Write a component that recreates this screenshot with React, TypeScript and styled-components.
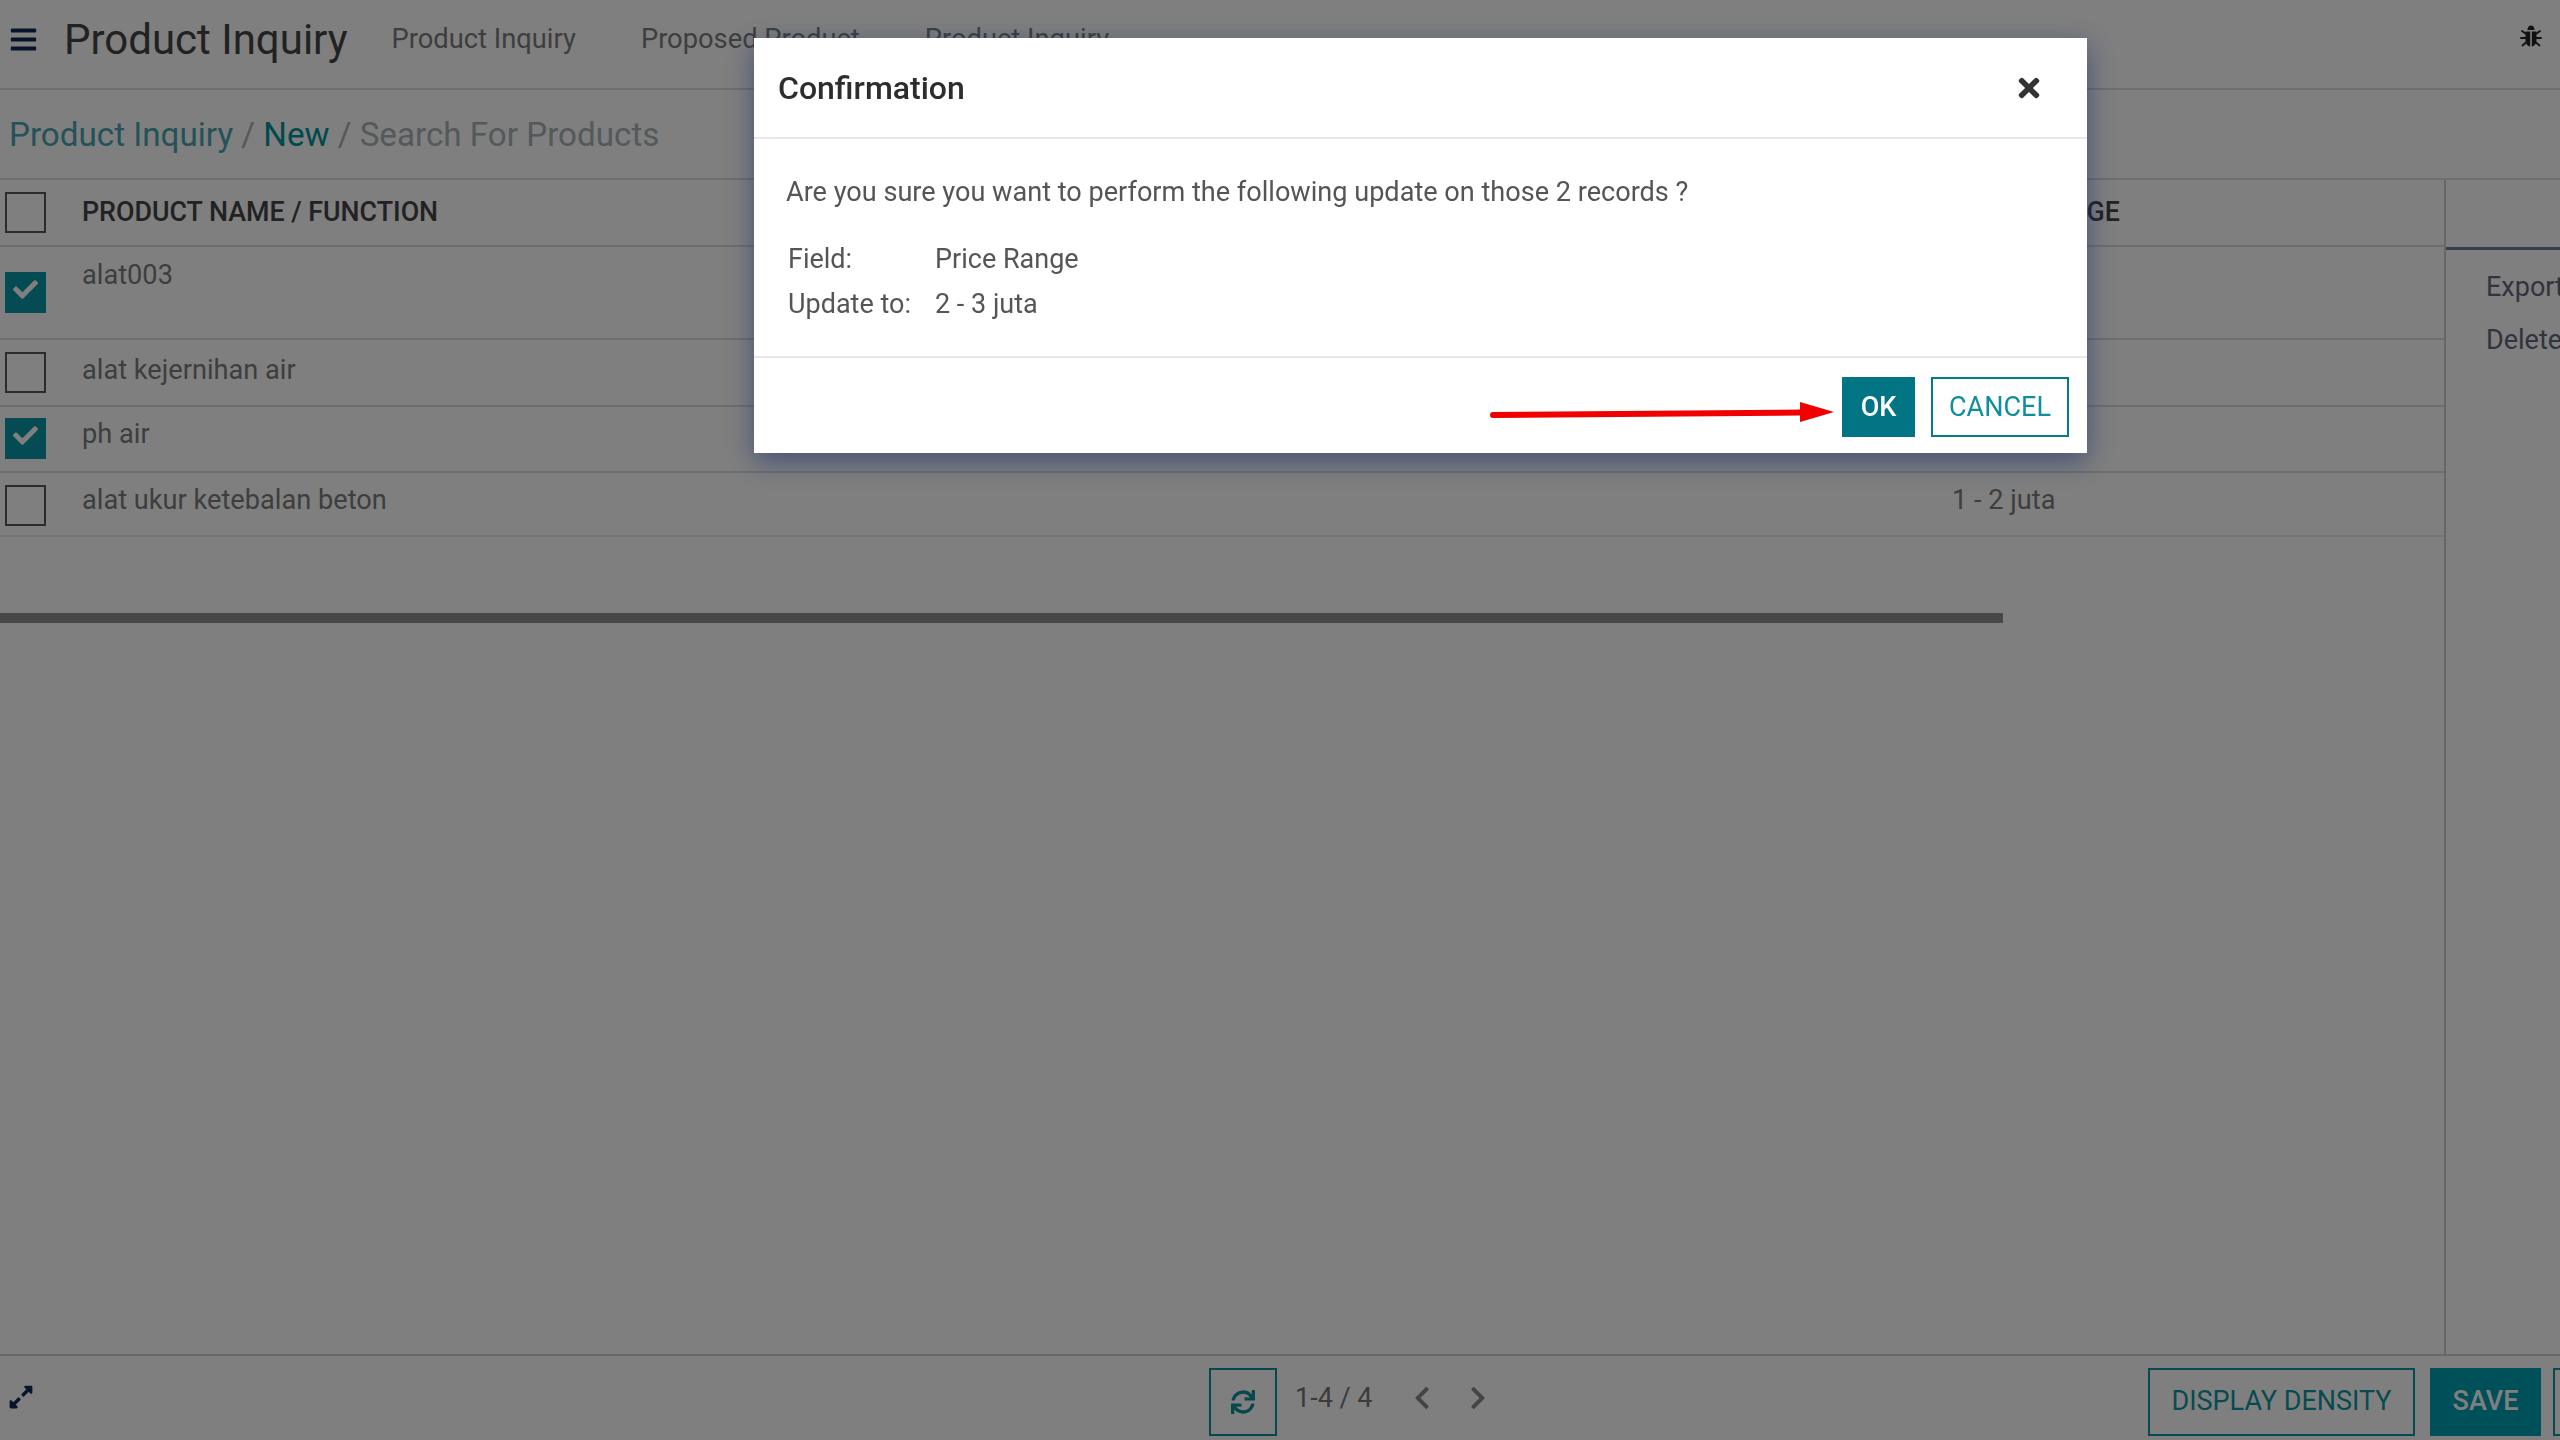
import React from "react";
import styled, { createGlobalStyle } from "styled-components";
import { FaBars, FaCheck, FaChevronLeft, FaChevronRight, FaExpandAlt, FaSync, FaTimes } from "react-icons/fa";

const Global = createGlobalStyle`
  html, body { margin: 0; padding: 0; width: 2560px; height: 1440px; overflow: hidden; background: #fff; }
  * { box-sizing: border-box; }
  body { font-family: Roboto, "Liberation Sans", sans-serif; color: #777; }
`;

const Page = styled.div`
  width: 2560px;
  height: 1440px;
  display: flex;
  flex-direction: column;
  overflow: hidden;
`;

const TopBar = styled.header`
  height: 90px;
  flex: none;
  display: flex;
  align-items: center;
  padding: 0 18px 10px 9px;
  border-bottom: 2px solid #dcdcdc;
  color: #7c7c7c;
`;

const Burger = styled(FaBars)`
  width: 29px;
  height: 29px;
  color: #0c2a55;
  flex: none;
`;

const AppTitle = styled.h1`
  margin: 0 44px 0 26px;
  font-size: 42px;
  font-weight: 400;
  color: #444;
  white-space: nowrap;
`;

const MenuItem = styled.span`
  font-size: 27.3px;
  margin-right: 65px;
  white-space: nowrap;
`;

const Bug = styled.svg`
  width: 22px;
  height: 24px;
  margin: 0 0 6px auto;
  flex: none;
  color: #222;
`;

const Breadcrumb = styled.nav`
  height: 90px;
  flex: none;
  display: flex;
  align-items: center;
  padding: 0 0 0 9px;
  font-size: 33.2px;
  color: #a8b2b6;
  white-space: pre;
  border-bottom: 2px solid #dcdcdc;
`;

const Crumb = styled.span<{ $strong?: boolean }>`
  color: ${(p) => (p.$strong ? "#00949c" : "#4aa5b0")};
`;

const Content = styled.div`
  flex: 1;
  min-height: 0;
  display: flex;
`;

const ListArea = styled.main`
  width: 2444px;
  flex: none;
  overflow: hidden;
`;

const Row = styled.div<{ $h: number; $faint?: boolean }>`
  height: ${(p) => p.$h}px;
  display: grid;
  grid-template-columns: 82px 1870px 1fr;
  border-bottom: 2px solid ${(p) => (p.$faint ? "#ececec" : "#dcdcdc")};
`;

const CheckCell = styled.div<{ $top: number }>`
  padding: ${(p) => p.$top}px 0 0 5px;
`;

const Box = styled.div<{ $on?: boolean }>`
  width: 41px;
  height: 41px;
  display: flex;
  align-items: center;
  justify-content: center;
  border: 2px solid ${(p) => (p.$on ? "#0a97a6" : "#585858")};
  background: ${(p) => (p.$on ? "#0a97a6" : "transparent")};
  color: #fff;
  svg {
    width: 25px;
    height: 25px;
    margin-top: -6px;
  }
`;

const HeadText = styled.div`
  font-size: 26.8px;
  font-weight: 500;
  line-height: 32px;
  padding-top: 16px;
  color: #444;
  white-space: nowrap;
`;

const CellText = styled.div<{ $top: number }>`
  font-size: 27.2px;
  line-height: 36px;
  padding-top: ${(p) => p.$top}px;
  color: #7c7c7c;
  white-space: nowrap;
`;

const ScrollTrack = styled.div`
  width: 2003px;
  height: 10px;
  margin-top: 76px;
  background: #8e8e8e;
`;

const Sidebar = styled.aside`
  flex: 1;
  min-width: 0;
  overflow: hidden;
  border-left: 2px solid #cfcfcf;
`;

const SideTab = styled.div`
  height: 70px;
  border-bottom: 3px solid #6b7f9c;
`;

const SideActions = styled.div`
  padding: 11px 0 0 40px;
`;

const SideAction = styled.div`
  font-size: 27px;
  line-height: 53px;
  color: #66667a;
  white-space: nowrap;
`;

const Footer = styled.footer`
  height: 86px;
  flex: none;
  display: flex;
  align-items: flex-start;
  padding: 12px 0 0 8px;
  border-top: 2px solid #d0d0d0;
  overflow: hidden;
`;

const Expand = styled(FaExpandAlt)`
  width: 26px;
  height: 26px;
  margin-top: 16px;
  color: #0c2a55;
  flex: none;
`;

const Refresh = styled.div`
  width: 68px;
  height: 68px;
  margin-left: 1175px;
  flex: none;
  display: flex;
  align-items: center;
  justify-content: center;
  border: 2px solid #0f8f9c;
  color: #0f8f9c;
  svg {
    width: 24px;
    height: 24px;
  }
`;

const Pager = styled.span`
  margin: 14px 0 0 18px;
  width: 119px;
  flex: none;
  font-size: 27px;
  line-height: 32px;
  color: #777;
  white-space: nowrap;
`;

const Chevron = styled.span<{ $gap: number }>`
  margin: 17px 0 0 ${(p) => p.$gap}px;
  width: 16px;
  height: 26px;
  flex: none;
  color: #8a8a8a;
  svg {
    display: block;
    width: 16px;
    height: 26px;
  }
`;

const OutlineButton = styled.div<{ $w: number; $gap: number }>`
  width: ${(p) => p.$w}px;
  height: 68px;
  margin-left: ${(p) => p.$gap}px;
  flex: none;
  display: flex;
  align-items: center;
  justify-content: center;
  padding-bottom: 2px;
  border: 2px solid #0f97a5;
  color: #0f97a5;
  font-size: 27px;
  white-space: nowrap;
`;

const SolidButton = styled.div`
  width: 111px;
  height: 68px;
  margin-left: 15px;
  flex: none;
  display: flex;
  align-items: center;
  justify-content: center;
  padding-bottom: 2px;
  background: #00a0b5;
  color: #fff;
  font-size: 27px;
  font-weight: 500;
`;

const Backdrop = styled.div`
  position: fixed;
  inset: 0;
  background: rgba(0, 0, 0, 0.5);
  padding: 38px 0 0 754px;
`;

const Modal = styled.section`
  position: relative;
  width: 1333px;
  height: 415px;
  display: flex;
  flex-direction: column;
  background: #fff;
  box-shadow: 0 8px 26px rgba(30, 50, 110, 0.6);
`;

const ModalHead = styled.div`
  height: 101px;
  flex: none;
  display: flex;
  align-items: center;
  justify-content: space-between;
  padding: 0 43px 0 24px;
  border-bottom: 2px solid #e8e8e8;
`;

const ModalTitle = styled.h2`
  margin: 0;
  font-size: 32px;
  font-weight: 500;
  color: #2d2d2d;
`;

const CloseIcon = styled(FaTimes)`
  width: 30px;
  height: 30px;
  color: #333;
`;

const ModalBody = styled.div`
  height: 219px;
  flex: none;
  padding: 33px 0 0 32px;
  border-bottom: 2px solid #e8e8e8;
`;

const Question = styled.p`
  margin: 0;
  font-size: 27.1px;
  line-height: 40px;
  color: #555;
`;

const Fields = styled.div`
  display: grid;
  grid-template-columns: 147px 1fr;
  grid-auto-rows: 45px;
  align-items: center;
  margin: 24px 0 0 2px;
  font-size: 27px;
  color: #555;
`;

const ModalFoot = styled.div`
  flex: 1;
  display: flex;
  align-items: flex-start;
  justify-content: flex-end;
  gap: 16px;
  padding: 19px 18px 0 0;
`;

const OkButton = styled.div`
  width: 73px;
  height: 60px;
  display: flex;
  align-items: center;
  justify-content: center;
  background: #017583;
  color: #fff;
  font-size: 27px;
  font-weight: 500;
`;

const CancelButton = styled.div`
  width: 138px;
  height: 60px;
  display: flex;
  align-items: center;
  justify-content: center;
  border: 2px solid #017e8a;
  color: #0e8f9b;
  font-size: 27px;
`;

const Arrow = styled.svg`
  position: absolute;
  left: 736px;
  top: 362px;
  width: 344px;
  height: 24px;
`;

const rows = [
  { name: "alat003", price: "", on: true, h: 93, cbTop: 25, textTop: 10 },
  { name: "alat kejernihan air", price: "", on: false, h: 67, cbTop: 12, textTop: 12 },
  { name: "ph air", price: "", on: true, h: 66, cbTop: 11, textTop: 9 },
  { name: "alat ukur ketebalan beton", price: "1 - 2 juta", on: false, h: 64, cbTop: 12, textTop: 9 },
];

export default function App() {
  return (
    <>
      <Global />
      <Page>
        <TopBar>
          <Burger />
          <AppTitle>Product Inquiry</AppTitle>
          <MenuItem>Product Inquiry</MenuItem>
          <MenuItem>Proposed Product</MenuItem>
          <MenuItem>Product Inquiry</MenuItem>
          <Bug viewBox="0 0 22 24">
            <path d="M7.5 6 C7.5 3 9 1.5 11 1.5 C13 1.5 14.500 3 14.500 6 Z" fill="currentColor" />
            <path d="M5.500 7.500 H10.200 V22.500 C7.500 22 5.500 19.500 5.500 16 Z M11.800 7.500 H16.500 V16 C16.500 19.500 14.500 22 11.800 22.500 Z" fill="currentColor" />
            <path d="M5.500 9.500 L2 7 M16.500 9.500 L20 7 M5.500 14 H1 M16.500 14 H21 M6 18.500 L2.500 21.500 M16 18.500 L19.500 21.500" stroke="currentColor" strokeWidth="1.800" strokeLinecap="round" fill="none" />
          </Bug>
        </TopBar>
        <Breadcrumb>
          <Crumb>Product Inquiry</Crumb> / <Crumb $strong>New</Crumb> / Search For Products
        </Breadcrumb>
        <Content>
          <ListArea>
            <Row $h={67}>
              <CheckCell $top={12}>
                <Box />
              </CheckCell>
              <HeadText>PRODUCT NAME / FUNCTION</HeadText>
              <HeadText>PRICE RANGE</HeadText>
            </Row>
            {rows.map((r, i) => (
              <Row key={r.name} $h={r.h} $faint={i === rows.length - 1}>
                <CheckCell $top={r.cbTop}>
                  <Box $on={r.on}>{r.on && <FaCheck />}</Box>
                </CheckCell>
                <CellText $top={r.textTop}>{r.name}</CellText>
                <CellText $top={r.textTop}>{r.price}</CellText>
              </Row>
            ))}
            <ScrollTrack />
          </ListArea>
          <Sidebar>
            <SideTab />
            <SideActions>
              <SideAction>Export</SideAction>
              <SideAction>Delete</SideAction>
            </SideActions>
          </Sidebar>
        </Content>
        <Footer>
          <Expand />
          <Refresh>
            <FaSync />
          </Refresh>
          <Pager>1-4 / 4</Pager>
          <Chevron $gap={0}>
            <FaChevronLeft />
          </Chevron>
          <Chevron $gap={40}>
            <FaChevronRight />
          </Chevron>
          <OutlineButton $w={267} $gap={662}>DISPLAY DENSITY</OutlineButton>
          <SolidButton>SAVE</SolidButton>
          <OutlineButton $w={60} $gap={12} />
        </Footer>
      </Page>
      <Backdrop>
        <Modal>
          <ModalHead>
            <ModalTitle>Confirmation</ModalTitle>
            <CloseIcon />
          </ModalHead>
          <ModalBody>
            <Question>Are you sure you want to perform the following update on those 2 records ?</Question>
            <Fields>
              <span>Field:</span>
              <span>Price Range</span>
              <span>Update to:</span>
              <span>2 - 3 juta</span>
            </Fields>
          </ModalBody>
          <ModalFoot>
            <OkButton>OK</OkButton>
            <CancelButton>CANCEL</CancelButton>
          </ModalFoot>
          <Arrow viewBox="0 0 344 24">
            <path d="M3 15 L312 12.5" stroke="#f00000" strokeWidth="6" strokeLinecap="round" fill="none" />
            <path d="M310 2 L344 12 L310 22 Z" fill="#f00000" />
          </Arrow>
        </Modal>
      </Backdrop>
    </>
  );
}
